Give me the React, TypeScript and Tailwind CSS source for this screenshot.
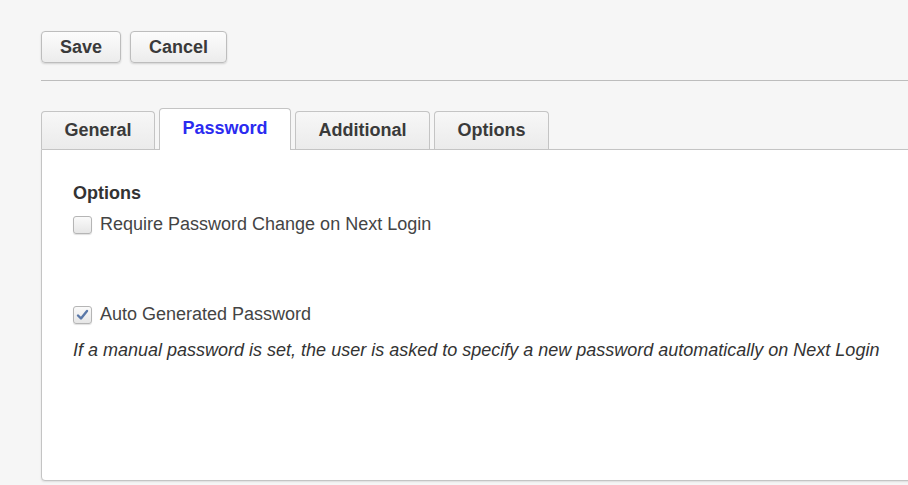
import React from 'react';

const font = { fontFamily: '"Liberation Sans", Arial, sans-serif' };

function Button({ label }: { label: string }) {
  return (
    <button className="h-8 px-[18px] rounded-[4px] border border-[#bdbdbd] bg-gradient-to-b from-[#fcfcfc] to-[#ececec] text-[18px] font-bold text-[#3a3a3a] leading-none shadow-[0_1px_2px_rgba(0,0,0,0.15)]">
      {label}
    </button>
  );
}

function Tab({ label, active }: { label: string; active?: boolean }) {
  if (active) {
    return (
      <div className="h-[42px] -mb-px px-[22.5px] flex items-center rounded-t-[4px] border border-b-0 border-[#c4c4c4] bg-white text-[18px] font-bold text-[#2b2bf0] relative z-10 pb-[2px]">
        {label}
      </div>
    );
  }
  return (
    <div className="h-[38px] px-[22.5px] flex items-center rounded-t-[4px] border border-b-0 border-[#c4c4c4] bg-gradient-to-b from-[#f7f7f7] to-[#ebebeb] text-[18px] font-bold text-[#3a3a3a]">
      {label}
    </div>
  );
}

function Checkbox({ checked }: { checked?: boolean }) {
  return (
    <span className="w-[19px] h-[18px] rounded-[3px] border border-[#b5b5b5] bg-gradient-to-b from-[#fafafa] to-[#e6e6e6] shadow-[0_1px_1px_rgba(0,0,0,0.12)] flex items-center justify-center shrink-0">
      {checked && (
        <svg width="13" height="12" viewBox="0 0 13 12">
          <path d="M2 6.5 L5 9.5 L11 2" fill="none" stroke="#5a78a8" strokeWidth="2.4" strokeLinecap="round" strokeLinejoin="round" />
        </svg>
      )}
    </span>
  );
}

export default function App() {
  return (
    <div className="w-full h-[485px] overflow-hidden bg-[#f6f6f6] text-[#333]" style={font}>
      {/* Toolbar */}
      <div className="pl-[41px] pt-[31px] flex gap-[9px]">
        <Button label="Save" />
        <Button label="Cancel" />
      </div>
      <div className="ml-[41px] mt-[17px] border-t border-[#bdbdbd]" />

      {/* Tabs */}
      <div className="ml-[41px] mt-[27px] flex items-end gap-1">
        <Tab label="General" />
        <Tab label="Password" active />
        <Tab label="Additional" />
        <Tab label="Options" />
      </div>

      {/* Panel */}
      <div className="ml-[41px] w-[900px] h-[332px] bg-white border border-[#c4c4c4] rounded-b-[4px] shadow-[0_1px_2px_rgba(0,0,0,0.1)] pl-[31px] pt-[33px] text-[18px]">
        <div className="font-bold text-[#333] leading-5">Options</div>
        <label className="mt-[8px] flex items-center gap-[8px] text-[#444]">
          <Checkbox />
          <span>Require Password Change on Next Login</span>
        </label>
        <label className="mt-[63px] flex items-center gap-[8px] text-[#444]">
          <Checkbox checked />
          <span>Auto Generated Password</span>
        </label>
        <p className="mt-[9px] italic text-[#333]">
          If a manual password is set, the user is asked to specify a new password automatically on Next Login
        </p>
      </div>
    </div>
  );
}
